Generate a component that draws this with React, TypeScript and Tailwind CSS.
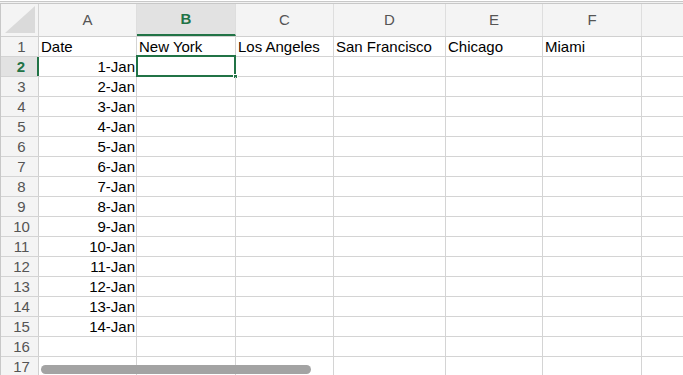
import React from "react";

const cols = [
  { key: "A", w: "w-[98px]" },
  { key: "B", w: "w-[99px]" },
  { key: "C", w: "w-[98px]" },
  { key: "D", w: "w-[112px]" },
  { key: "E", w: "w-[97px]" },
  { key: "F", w: "w-[99px]" },
];

const header = ["Date", "New York", "Los Angeles", "San Francisco", "Chicago", "Miami"];

const dates = Array.from({ length: 14 }, (_, i) => `${i + 1}-Jan`);

function CornerCell() {
  return (
    <div className="w-[38px] h-full shrink-0 border-r border-[#d4d4d4] bg-[#f4f4f4] flex items-end justify-end pb-[3px] pr-[3px]">
      <svg width="30" height="27" viewBox="0 0 30 27">
        <polygon points="0,27 30,27 30,0" fill="#dadada" />
      </svg>
    </div>
  );
}

function ColHeader() {
  return (
    <div className="flex h-[33px] border-b border-[#d0d0d0]">
      <CornerCell />
      {cols.map((c) => {
        const active = c.key === "B";
        return (
          <div
            key={c.key}
            className={`${c.w} shrink-0 h-full border-r border-[#dedede] flex items-center justify-center text-[15px] ${
              active
                ? "bg-[#e2e2e2] text-[#217346] font-bold border-b-2 border-b-[#217346]"
                : "bg-[#f4f4f4] text-[#555]"
            }`}
          >
            {c.key}
          </div>
        );
      })}
      <div className="flex-1 bg-[#f4f4f4]" />
    </div>
  );
}

function Row({ n }: { n: number }) {
  const active = n === 2;
  const values: string[] =
    n === 1 ? header : n >= 2 && n <= 15 ? [dates[n - 2]] : [];
  return (
    <div className="flex h-[20px] border-b border-[#d4d4d4]">
      <div
        className={`w-[38px] shrink-0 h-full flex items-center justify-center pl-[4px] pt-[1px] text-[15px] ${
          active
            ? "bg-[#e2e2e2] text-[#217346] font-bold border-r-2 border-[#217346]"
            : "bg-[#f4f4f4] text-[#555] border-r border-[#d0d0d0]"
        }`}
      >
        {n}
      </div>
      {cols.map((c, i) => {
        const v = values[i];
        const right = n > 1 && i === 0;
        return (
          <div
            key={c.key}
            className={`${c.w} shrink-0 h-full border-r border-[#d4d4d4] flex items-center pt-[1px] text-[15px] text-black whitespace-nowrap relative ${
              right ? "justify-end pr-[1px]" : "pl-[2px]"
            }`}
          >
            {v}
            {active && c.key === "B" && (
              <div className="absolute -left-[1px] -top-[2px] w-[100px] h-[22px] border-2 border-[#217346]">
                <div className="absolute -right-[4px] -bottom-[4px] w-[5px] h-[5px] bg-[#217346] border border-white" />
              </div>
            )}
          </div>
        );
      })}
      <div className="flex-1" />
    </div>
  );
}

export default function App() {
  return (
    <div
      className="relative w-[683px] h-[375px] overflow-hidden bg-white"
      style={{ fontFamily: '"Liberation Sans", Arial, sans-serif' }}
    >
      {/* window chrome lines above the sheet */}
      <div className="mt-[1px] h-[3px] border-t border-b border-[#c8c8c8] bg-[#f2f2f2]" />
      <div className="border-l border-[#c8c8c8]">
        <ColHeader />
        {Array.from({ length: 17 }, (_, i) => (
          <Row key={i} n={i + 1} />
        ))}
      </div>

      {/* horizontal scroll thumb */}
      <div className="absolute left-[41px] top-[365px] w-[270px] h-[9px] rounded-full bg-[#a3a3a3]" />
    </div>
  );
}
